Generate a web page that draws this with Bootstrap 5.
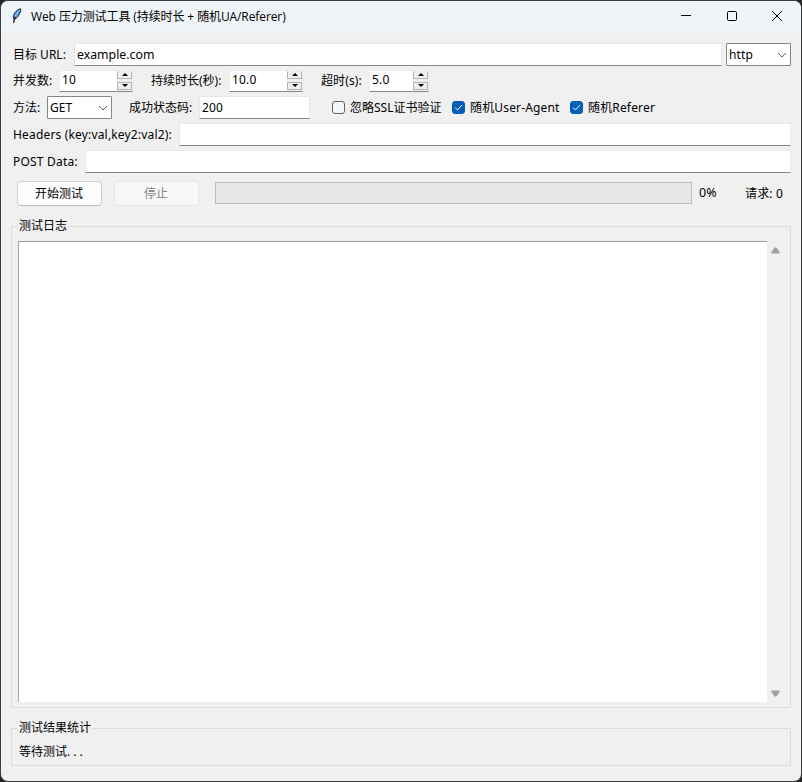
<!DOCTYPE html>
<html lang="zh-CN">
<head>
<meta charset="utf-8">
<meta name="viewport" content="width=device-width, initial-scale=1">
<title>Web 压力测试工具</title>
<link href="https://cdn.jsdelivr.net/npm/bootstrap@5.3.0/dist/css/bootstrap.min.css" rel="stylesheet">
<style>
body{margin:0;background:#242424;overflow:hidden;font:12px/16px "Noto Sans","Noto Sans CJK SC",sans-serif;color:#000}
.app-window{width:802px;height:782px;background:#f0f0f0;border:1px solid #3c3c40;border-radius:8px;overflow:hidden}
.title-bar{height:30px;background:#eff4f9;padding-left:10px}
.title-text{font-family:"Open Sans","Noto Sans CJK SC",sans-serif;margin:1px 0 0 8px;white-space:nowrap;letter-spacing:-.1px}
.win-btns{margin-right:1px}
.win-btn{width:45.5px;display:flex;justify-content:center}
.form-line{height:23px;padding:0 10px 0 12px;white-space:nowrap}
.lbl{flex:none}
.w-url{width:61px}.w-threads{width:46px}.w-duration{width:78px}.w-timeout{width:48px;letter-spacing:.12px}
.w-method{width:34px}.w-codes{width:70px}.w-ssl{width:102px}.w-agent{width:100px}
.w-headers{width:166px;letter-spacing:.17px}.w-post{width:72px;letter-spacing:.2px}
.latin-wide{letter-spacing:.16px}
.gap-first{margin-top:12px}.gap-near{margin-top:3px}.gap-row{margin-top:4px}
.field{height:23px;border:1px solid #e8e8e8;border-bottom:1px solid #868686;background:#fff;padding:0 2px;line-height:21px;min-width:0}
.ent{font-size:12.3px}
.pick{width:65px;height:23px;border:1px solid #868686;border-radius:1px;background:#fff;padding:0 3px 0 2px;flex:none}
.spin{width:74px;height:22px;border:1px solid #ececec;border-bottom:1px solid #868686;background:#fff;padding:0 0 0 2px;flex:none}
.spin.narrow{width:60px}
.spin-txt{line-height:18px}
.steps{width:15px;background:#f0f0f0;gap:3px}
.step{width:15px;height:8px;border:1px solid #b4b4b4;border-top-color:#f0f0f0;background:#efefef;display:flex;align-items:center;justify-content:center}
.step.down{border-top-color:#b4b4b4}
.chk{width:13px;height:13px;border:1px solid #626262;border-radius:3px;background:#f6f6f6;flex:none}
.chk.on{background:#005fb8;border-color:#005fb8;display:flex;align-items:center;justify-content:center}
.actions{margin:8px 10px 0 16px;height:25px}
.act{width:85px;height:25px;padding:0 1px 0 0;font-size:12px;line-height:22px;color:#000;background:#fdfdfd;border:1px solid #d0d0d0;border-bottom-color:#bcbcbc;border-radius:4px;flex:none}
.act:disabled{color:#838383;background:#f8f8f8;border-color:#e6e6e6;opacity:1}
.meter{width:477px;height:22px;background:#e6e6e6;border:1px solid #bcbcbc;border-radius:0;flex:none;margin:0 0 2px 16px}
.percent{margin:-1px 0 0 7px;width:46px;font-size:12.5px}
.group{border:1px solid #dcdcdc;margin:20px 10px 0}
.group-log{height:482px}.group-stats{height:38px}
.group-name{display:block;width:max-content;background:#f0f0f0;margin:-9px 0 0 6px;padding:0 1px;height:16px}
.log{background:#fff;border:1px solid #a0a0a0;border-right:0;border-bottom:0;width:749px;height:461px;margin-left:6px}
.scroll{width:17px;padding:6px 0 5px}
</style>
</head>
<body>
<div class="app-window d-flex flex-column">
  <header class="title-bar d-flex align-items-center flex-shrink-0">
    <svg width="12" height="16" viewBox="0 0 12 16"><path d="M9.700.8C6 1.300 2.800 5 2.300 8.800L3 11.500 5.800 9.800C7.500 8 8.500 6.500 8.600 5.200L9.700 4Z" fill="#4f94dc" stroke="#17202c" stroke-width=".9"/><path d="M8.500 2.300Q6 4.500 4.500 8" fill="none" stroke="#a9d2f7" stroke-width="1"/><path d="M4.200 9Q3 12 2.600 15" fill="none" stroke="#111" stroke-width="1.200"/></svg>
    <span class="title-text">Web 压力测试工具 (持续时长 + 随机UA/Referer)</span>
    <div class="win-btns d-flex ms-auto">
      <span class="win-btn"><svg width="12" height="12"><path d="M1 5.500H11" stroke="#000"/></svg></span>
      <span class="win-btn"><svg width="12" height="12"><rect x="1.500" y="1.500" width="9" height="9" rx="1" fill="none" stroke="#000"/></svg></span>
      <span class="win-btn"><svg width="12" height="12"><path d="M1 1L11 11M11 1L1 11" stroke="#000"/></svg></span>
    </div>
  </header>

  <div class="form-line gap-first d-flex align-items-center">
    <span class="lbl w-url">目标 URL:</span>
    <div class="field ent flex-grow-1">example.com</div>
    <div class="pick d-flex align-items-center justify-content-between ms-1"><span class="latin-wide">http</span><svg width="10" height="6"><path d="M1 1L5 5L9 1" fill="none" stroke="#606060"/></svg></div>
  </div>

  <div class="form-line gap-near d-flex align-items-center">
    <span class="lbl w-threads">并发数:</span>
    <div class="spin d-flex justify-content-between"><span class="spin-txt latin-wide">10</span><span class="steps d-flex flex-column"><i class="step"><svg width="6" height="3"><path d="M0 3L3 0L6 3Z"/></svg></i><i class="step down"><svg width="6" height="3"><path d="M0 0L3 3L6 0Z"/></svg></i></span></div>
    <span class="lbl w-duration" style="margin-left:18px">持续时长(秒):</span>
    <div class="spin d-flex justify-content-between"><span class="spin-txt latin-wide">10.0</span><span class="steps d-flex flex-column"><i class="step"><svg width="6" height="3"><path d="M0 3L3 0L6 3Z"/></svg></i><i class="step down"><svg width="6" height="3"><path d="M0 0L3 3L6 0Z"/></svg></i></span></div>
    <span class="lbl w-timeout" style="margin-left:18px">超时(s):</span>
    <div class="spin narrow d-flex justify-content-between"><span class="spin-txt latin-wide">5.0</span><span class="steps d-flex flex-column"><i class="step"><svg width="6" height="3"><path d="M0 3L3 0L6 3Z"/></svg></i><i class="step down"><svg width="6" height="3"><path d="M0 0L3 3L6 0Z"/></svg></i></span></div>
  </div>

  <div class="form-line gap-row d-flex align-items-center">
    <span class="lbl w-method">方法:</span>
    <div class="pick d-flex align-items-center justify-content-between"><span>GET</span><svg width="10" height="6"><path d="M1 1L5 5L9 1" fill="none" stroke="#606060"/></svg></div>
    <span class="lbl w-codes" style="margin-left:17px">成功状态码:</span>
    <div class="field latin-wide" style="width:111px">200</div>
    <span class="chk" style="margin-left:22px"></span><span class="lbl w-ssl" style="margin-left:5px">忽略SSL证书验证</span>
    <span class="chk on"><svg width="9" height="7"><path d="M1 3.500L3.500 6L8 1" fill="none" stroke="#fff"/></svg></span><span class="lbl w-agent latin-wide" style="margin-left:5px">随机User-Agent</span>
    <span class="chk on"><svg width="9" height="7"><path d="M1 3.500L3.500 6L8 1" fill="none" stroke="#fff"/></svg></span><span class="lbl latin-wide" style="margin-left:5px">随机Referer</span>
  </div>

  <div class="form-line gap-row d-flex align-items-center">
    <span class="lbl w-headers">Headers (key:val,key2:val2):</span>
    <div class="field flex-grow-1"></div>
  </div>
  <div class="form-line gap-row d-flex align-items-center">
    <span class="lbl w-post">POST Data:</span>
    <div class="field flex-grow-1"></div>
  </div>

  <div class="actions d-flex align-items-center">
    <button class="btn act">开始测试</button>
    <button class="btn act" style="margin-left:12px" disabled>停止</button>
    <div class="progress meter"></div>
    <span class="percent">0%</span>
    <span class="text-nowrap latin-wide">请求: 0</span>
  </div>

  <section class="group group-log flex-shrink-0">
    <span class="group-name">测试日志</span>
    <div class="d-flex" style="margin-top:7px">
      <div class="log"></div>
      <div class="scroll d-flex flex-column justify-content-between align-items-center">
        <svg width="9" height="7"><path d="M3.500.500H5.500L8.500 5V6.500H.5V5Z" fill="#a0a0a0"/></svg>
        <svg width="9" height="7"><path d="M.5.500H8.500V2L5.500 6.500H3.500L.5 2Z" fill="#a0a0a0"/></svg>
      </div>
    </div>
  </section>
  <section class="group group-stats flex-shrink-0">
    <span class="group-name">测试结果统计</span>
    <div style="margin:8px 0 0 7px">等待测试<span style="letter-spacing:3px">...</span></div>
  </section>
</div>
<script src="https://cdn.jsdelivr.net/npm/bootstrap@5.3.0/dist/js/bootstrap.bundle.min.js"></script>
</body>
</html>
